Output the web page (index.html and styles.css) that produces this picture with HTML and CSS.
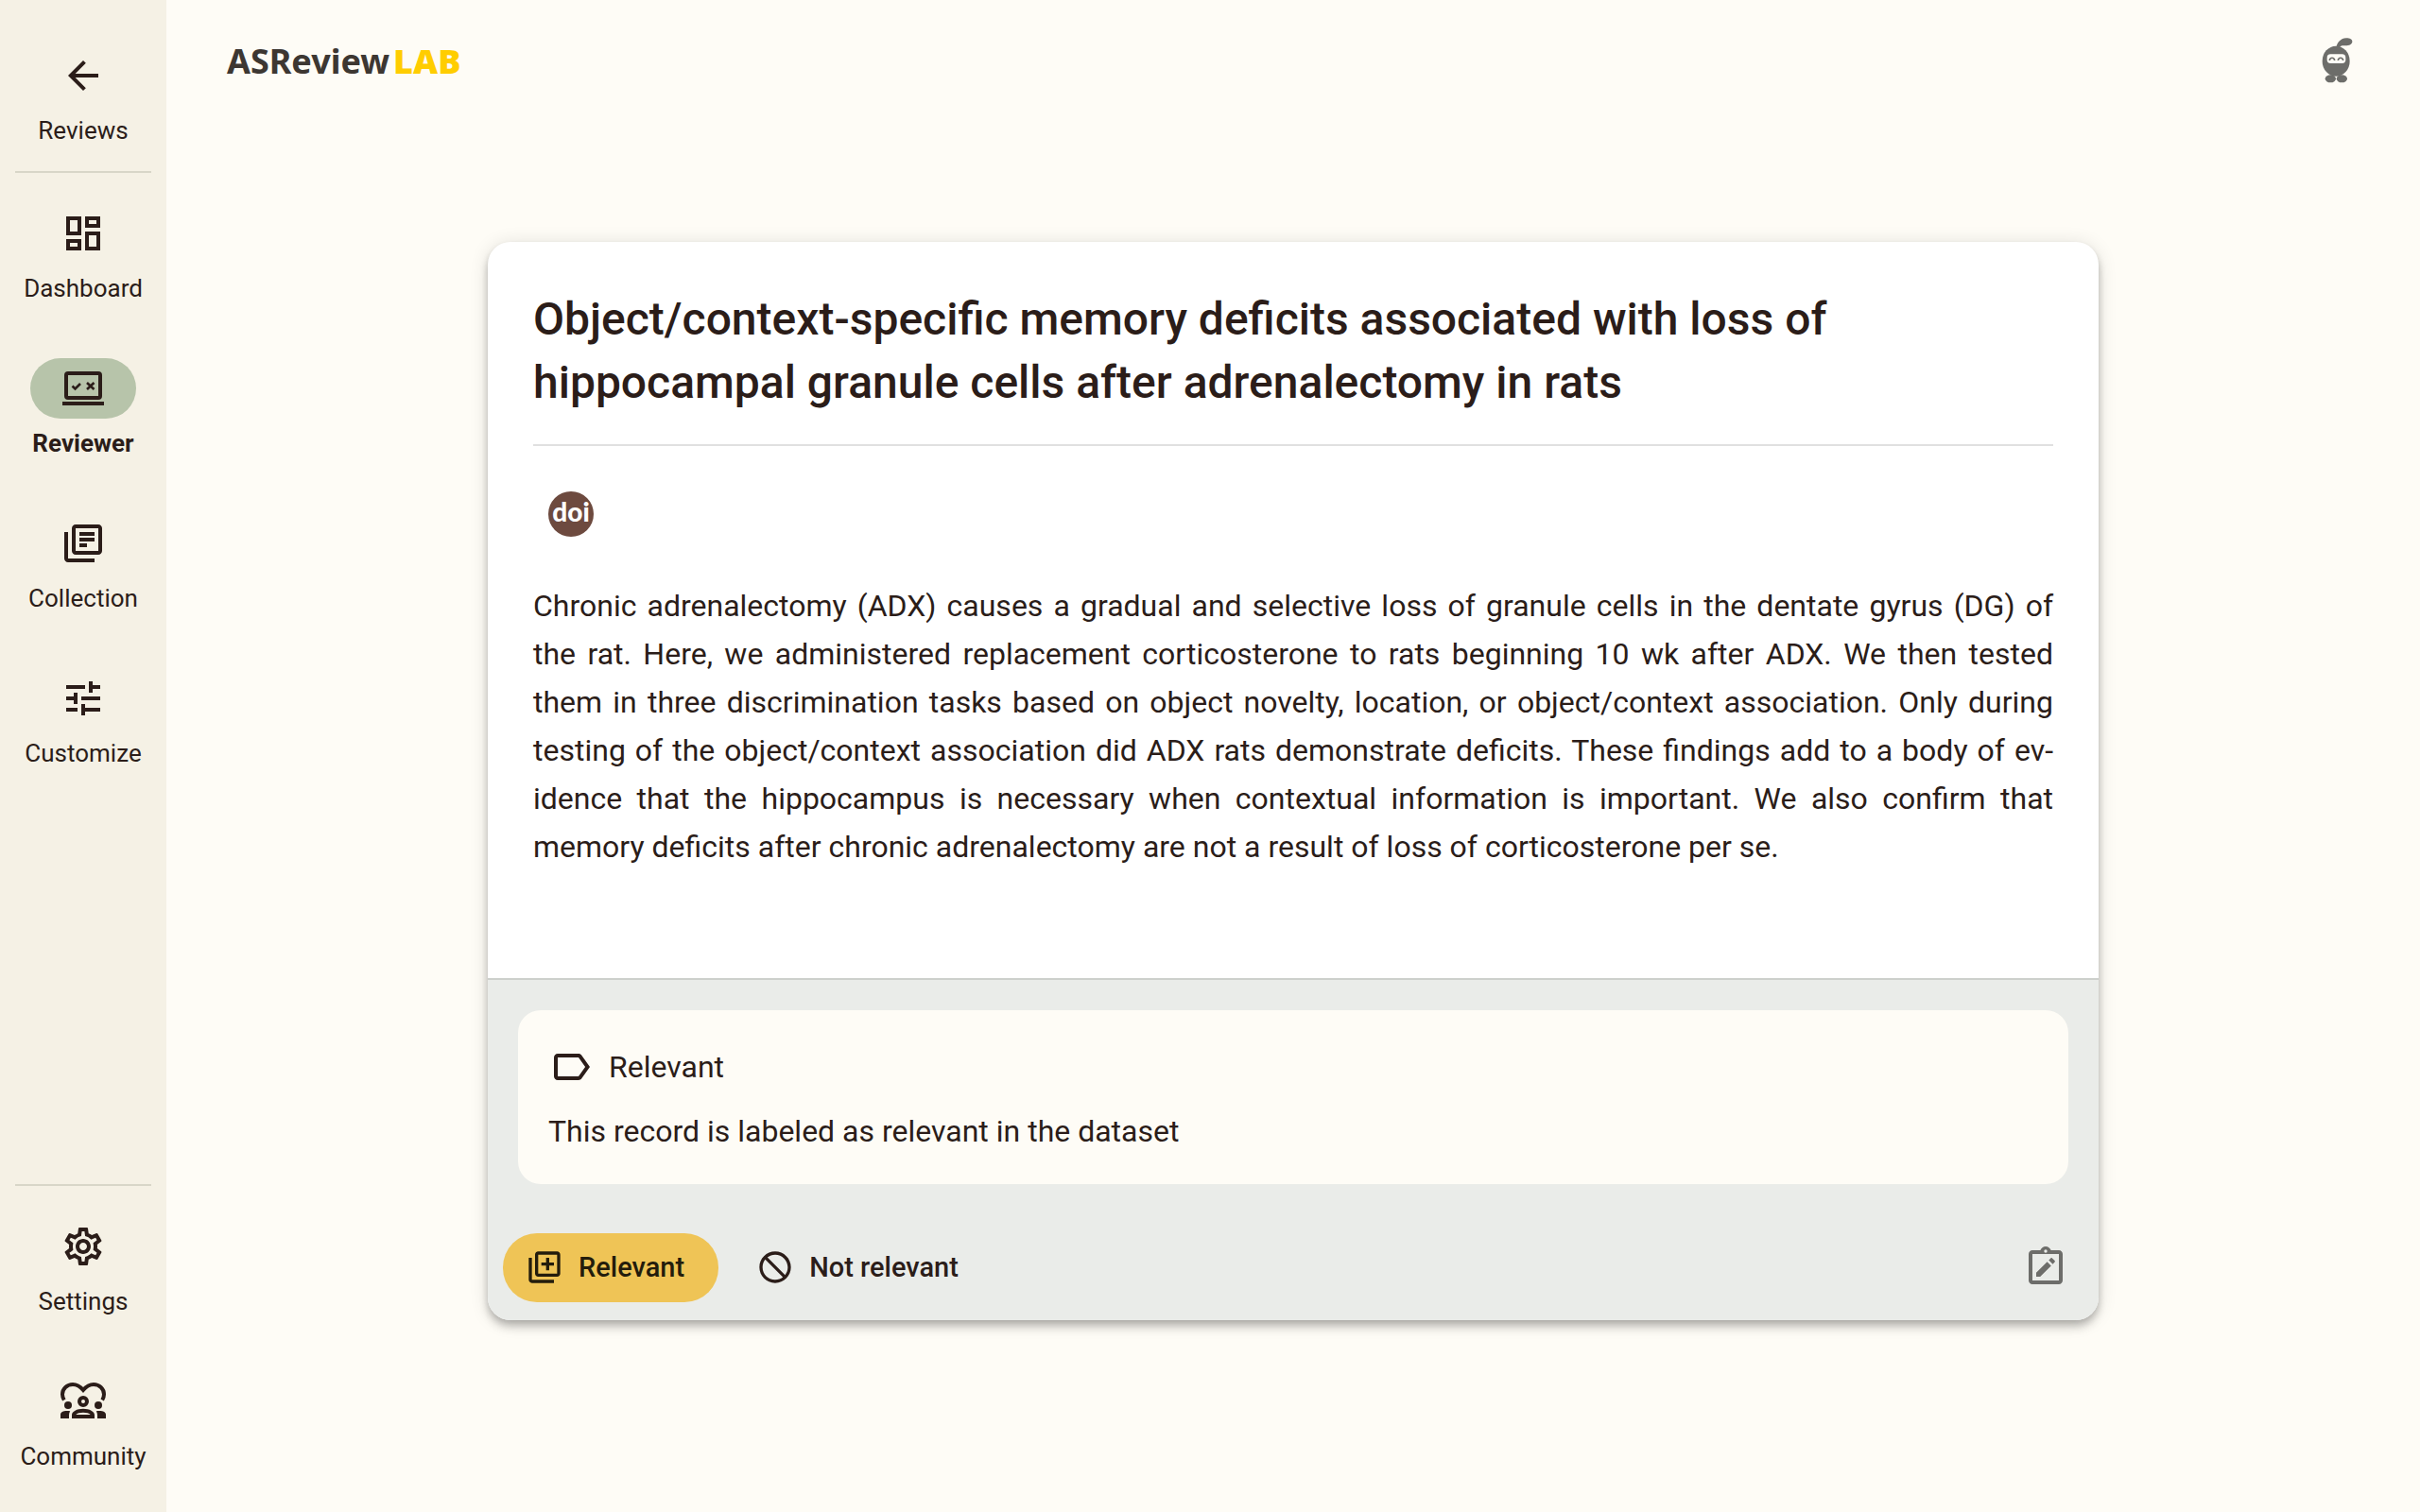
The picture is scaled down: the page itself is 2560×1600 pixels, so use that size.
FILE: index.html
```html
<!DOCTYPE html>
<html lang="en">
<head>
<meta charset="utf-8">
<meta name="viewport" content="width=device-width, initial-scale=1">
<title>ASReview LAB</title>
<link rel="stylesheet" href="styles.css">
</head>
<body>
<div class="app">
  <nav class="sidebar" aria-label="Main">
    <a class="nav-item" href="#reviews">
      <span class="nav-icon"><svg class="icon" viewBox="0 0 24 24"><path d="M20 11H7.83l5.59-5.59L12 4l-8 8 8 8 1.41-1.41L7.83 13H20v-2z"/></svg></span>
      <span class="nav-label">Reviews</span>
    </a>
    <hr class="nav-divider">
    <div class="nav-list">
      <a class="nav-item" href="#dashboard">
        <span class="nav-icon"><svg class="icon" viewBox="0 0 24 24"><path d="M19 5v2h-4V5h4M9 5v6H5V5h4m10 8v6h-4v-6h4M9 17v2H5v-2h4M21 3h-8v6h8V3zM11 3H3v10h8V3zm10 8h-8v10h8V11zm-10 4H3v6h8v-6z"/></svg></span>
        <span class="nav-label">Dashboard</span>
      </a>
      <a class="nav-item nav-item-active" href="#reviewer" aria-current="page">
        <span class="nav-icon"><svg class="icon" viewBox="0 0 48 48"><g fill="none" stroke="currentColor"><rect x="6" y="8" width="36" height="26" rx="2" stroke-width="4"/><path d="M2 40h44" stroke-width="4"/><path d="M12.500 21.500l3 3 5.500-5.500M28 18l7.500 7M35.500 18l-7.500 7" stroke-width="2.600"/></g></svg></span>
        <span class="nav-label">Reviewer</span>
      </a>
      <a class="nav-item" href="#collection">
        <span class="nav-icon"><svg class="icon" viewBox="0 0 24 24"><path d="M4 6H2v14c0 1.1.9 2 2 2h14v-2H4V6zm16-4H8c-1.1 0-2 .9-2 2v12c0 1.1.9 2 2 2h12c1.100 0 2-.9 2-2V4c0-1.100-.9-2-2-2zm0 14H8V4h12v12zM10 9h8v2h-8zm0 3h4v2h-4zm0-6h8v2h-8z"/></svg></span>
        <span class="nav-label">Collection</span>
      </a>
      <a class="nav-item" href="#customize">
        <span class="nav-icon"><svg class="icon" viewBox="0 0 24 24"><path d="M3 17v2h6v-2H3zM3 5v2h10V5H3zm10 16v-2h8v-2h-8v-2h-2v6h2zM7 9v2H3v2h4v2h2V9H7zm14 4v-2H11v2h10zm-6-4h2V7h4V5h-4V3h-2v6z"/></svg></span>
        <span class="nav-label">Customize</span>
      </a>
    </div>
    <div class="nav-spacer"></div>
    <hr class="nav-divider">
    <div class="nav-list">
      <a class="nav-item" href="#settings">
        <span class="nav-icon"><svg class="icon" viewBox="0 0 24 24"><path d="M19.43 12.98c.04-.32.07-.64.07-.98 0-.34-.03-.66-.07-.98l2.11-1.65c.19-.15.24-.42.12-.64l-2-3.46c-.09-.16-.26-.25-.44-.25-.06 0-.12.01-.17.03l-2.49 1c-.52-.4-1.08-.73-1.69-.98l-.38-2.65C14.46 2.18 14.25 2 14 2h-4c-.25 0-.46.18-.49.42l-.38 2.65c-.61.25-1.17.59-1.69.98l-2.49-1c-.06-.02-.12-.03-.18-.03-.17 0-.34.09-.43.25l-2 3.46c-.13.22-.07.49.12.64l2.11 1.65c-.04.32-.07.65-.07.98 0 .33.03.66.07.98l-2.11 1.65c-.19.15-.24.42-.12.64l2 3.46c.09.16.26.25.44.25.06 0 .12-.01.17-.03l2.49-1c.52.4 1.08.73 1.69.98l.38 2.65c.03.24.24.42.49.42h4c.25 0 .46-.18.49-.42l.38-2.65c.61-.25 1.17-.59 1.69-.98l2.49 1c.06.02.12.03.18.03.17 0 .34-.09.43-.25l2-3.46c.12-.22.07-.49-.12-.64l-2.11-1.65zm-1.98-1.71c.04.31.05.52.05.73 0 .21-.02.43-.05.73l-.14 1.13.89.7 1.08.84-.7 1.21-1.27-.51-1.04-.42-.9.68c-.43.32-.84.56-1.25.73l-1.06.43-.16 1.13-.2 1.35h-1.4l-.19-1.35-.16-1.13-1.06-.43c-.43-.18-.83-.41-1.23-.71l-.91-.7-1.06.43-1.27.51-.7-1.21 1.08-.84.89-.7-.14-1.13c-.03-.31-.05-.54-.05-.74s.02-.43.05-.73l.14-1.13-.89-.7-1.08-.84.7-1.21 1.27.51 1.04.42.9-.68c.43-.32.84-.56 1.25-.73l1.06-.43.16-1.13.2-1.35h1.39l.19 1.35.16 1.13 1.06.43c.43.18.83.41 1.23.71l.91.7 1.06-.43 1.27-.51.7 1.21-1.07.85-.89.7.14 1.13zM12 8c-2.21 0-4 1.79-4 4s1.79 4 4 4 4-1.79 4-4-1.790-4-4-4zm0 6c-1.100 0-2-.9-2-2s.9-2 2-2 2 .9 2 2-.9 2-2 2z"/></svg></span>
        <span class="nav-label">Settings</span>
      </a>
      <a class="nav-item" href="#community">
        <span class="nav-icon"><svg class="icon" viewBox="0 0 48 48"><path d="M3.800 22.500C2.600 20.500 2 18.500 2 16.500 2 10.500 7 6 13 6c4.500 0 8 2.400 11 6 3-3.600 6.500-6 11-6 6 0 11 4.500 11 10.500 0 2-.6 4-1.800 6" fill="none" stroke="currentColor" stroke-width="4"/><circle cx="24" cy="24" r="4" fill="none" stroke="currentColor" stroke-width="4"/><circle cx="8" cy="28" r="4"/><circle cx="40" cy="28" r="4"/><path d="M0 42v-4c0-2.600 3-4 6.500-4 1.300 0 2.500.1 3.700.3C9.400 35.500 9 37 9 38.500V42zM48 42v-4c0-2.600-3-4-6.500-4-1.300 0-2.500.1-3.700.3.8 1.200 1.200 2.700 1.200 4.200V42z"/><path fill-rule="evenodd" d="M12 42v-3.500c0-4 5.300-6.800 12-6.800s12 2.800 12 6.800V42zm4.300-4h15.400c-1.300-1.500-4.300-2.300-7.700-2.300s-6.400.8-7.700 2.300z"/></svg></span>
        <span class="nav-label">Community</span>
      </a>
    </div>
  </nav>

  <div class="content">
    <header class="topbar">
      <a class="logo" href="#home">ASReview<span class="logo-lab">LAB</span></a>
      <button class="mascot" type="button" aria-label="Elas">
        <svg class="icon" viewBox="84 60 144 144"><path d="M154 92c2-14 12-30 32-31 12 0 19 4 19 11 0 8-9 13-22 13-8 0-13-1-17 4z"/><ellipse cx="153.500" cy="134" rx="43.500" ry="48"/><ellipse cx="136" cy="190" rx="17" ry="12"/><ellipse cx="172" cy="190" rx="17" ry="12"/><rect x="125" y="112" width="59" height="29" rx="11" fill="#fefcf6"/><path d="M133 132c1-11 15-11 16 0M160 132c1-11 15-11 16 0" fill="none" stroke="currentColor" stroke-width="5"/></svg>
      </button>
    </header>

    <main class="stage">
      <article class="card">
        <section class="record">
          <h1 class="record-title">Object/context-specific memory deficits associated with loss of hippocampal granule cells after adrenalectomy in rats</h1>
          <hr class="record-divider">
          <a class="doi" href="#doi"><span class="doi-badge">doi</span></a>
          <p class="abstract">Chronic adrenalectomy (ADX) causes a gradual and selective loss of granule cells in the dentate gyrus (DG) of the&nbsp;rat. Here, we administered replacement corticosterone to rats beginning 10 wk after ADX. We then tested them&nbsp;in&nbsp;three discrimination tasks based on object novelty, location, or object/context association. Only during testing&nbsp;of&nbsp;the object/context association did ADX rats demonstrate deficits. These findings add to a body of ev&shy;idence&nbsp;that the hippocampus is necessary when contextual information is important. We also confirm that memory&nbsp;deficits after chronic adrenalectomy are not a result of loss of corticosterone per se.</p>
        </section>
        <section class="decision">
          <div class="hint">
            <div class="hint-head">
              <svg class="icon" viewBox="0 0 24 24"><path d="M17.63 5.84C17.27 5.33 16.67 5 16 5L5 5.010C3.900 5.010 3 5.900 3 7v10c0 1.100.9 1.990 2 1.990L16 19c.67 0 1.270-.33 1.630-.84L22 12l-4.370-6.160zM16 17H5V7h11l3.550 5L16 17z"/></svg>
              <span>Relevant</span>
            </div>
            <p class="hint-text">This record is labeled as relevant in the dataset</p>
          </div>
          <div class="actions">
            <button class="btn btn-primary" type="button">
              <svg class="icon icon-small" viewBox="0 0 24 24"><path d="M4 6H2v14c0 1.100.9 2 2 2h14v-2H4V6zm16-4H8c-1.100 0-2 .9-2 2v12c0 1.100.9 2 2 2h12c1.100 0 2-.9 2-2V4c0-1.100-.9-2-2-2zm0 14H8V4h12v12zm-7-2h2v-3h3V9h-3V6h-2v3h-3v2h3v3z"/></svg>
              Relevant
            </button>
            <button class="btn" type="button">
              <svg class="icon icon-small" viewBox="0 0 24 24"><path d="M12 2C6.480 2 2 6.480 2 12s4.480 10 10 10 10-4.480 10-10S17.520 2 12 2zm0 18c-4.420 0-8-3.580-8-8 0-1.850.63-3.550 1.690-4.900L16.900 18.310C15.550 19.370 13.850 20 12 20zm6.310-3.100L7.100 5.690C8.450 4.630 10.150 4 12 4c4.420 0 8 3.580 8 8 0 1.850-.63 3.550-1.690 4.900z"/></svg>
              Not relevant
            </button>
            <button class="note" type="button" aria-label="Add note">
              <svg class="icon" viewBox="0 2 48 48"><path fill-rule="evenodd" d="M10 8h8.400C19.200 5.700 21.400 4 24 4s4.800 1.700 5.600 4H38c2.200 0 4 1.800 4 4v28c0 2.200-1.800 4-4 4H10c-2.200 0-4-1.800-4-4V12c0-2.200 1.800-4 4-4zm0 4v28h28V12zm14-4.700a1.700 1.700 0 1 0 0 3.400 1.700 1.700 0 0 0 0-3.400z"/><path d="M14 31.800 25.600 20.200l4.200 4.200L18.200 36H14zM33.600 20.600l-2.100 2.100-4.200-4.200 2.100-2.100c.4-.4 1.100-.4 1.500 0l2.700 2.700c.4.4.4 1.100 0 1.500z"/></svg>
            </button>
          </div>
        </section>
      </article>
    </main>
  </div>
</div>
</body>
</html>
```
FILE: styles.css
```css
* {
  box-sizing: border-box;
}

body {
  margin: 0;
  background: #fefcf6;
  color: #2b1d19;
  font-family: Roboto, "Liberation Sans", sans-serif;
  font-size: 32px;
}

a {
  color: inherit;
  text-decoration: none;
}

button {
  border: 0;
  background: none;
  color: inherit;
  font: inherit;
  cursor: pointer;
}

hr {
  height: 2px;
  border: 0;
}

.icon {
  display: block;
  flex: none;
  width: 48px;
  height: 48px;
  fill: currentColor;
}

.icon-small {
  width: 40px;
  height: 40px;
}

.app {
  display: flex;
  min-height: 100vh;
}

/* Navigation rail */
.sidebar {
  display: flex;
  flex: none;
  flex-direction: column;
  width: 176px;
  padding: 24px 0 17px;
  background: #f5f1e5;
}

.nav-list {
  display: flex;
  flex-direction: column;
  gap: 8px;
}

.nav-item {
  display: flex;
  flex-direction: column;
  align-items: center;
  gap: 8px;
  padding: 24px 0;
}

.nav-icon {
  display: flex;
  align-items: center;
  justify-content: center;
  width: 112px;
  height: 64px;
  border-radius: 32px;
}

.nav-label {
  font-size: 26px;
  line-height: 36px;
}

.nav-item-active .nav-icon {
  background: #b7c4aa;
}

.nav-item-active .nav-label {
  font-weight: 700;
}

.nav-divider {
  flex: none;
  margin: 1px 16px 8px;
  background: #d8d6c8;
}

.nav-spacer {
  flex: 1;
}

/* Main column */
.content {
  display: flex;
  flex: 1;
  flex-direction: column;
  min-width: 0;
}

.topbar {
  display: flex;
  align-items: center;
  justify-content: space-between;
  height: 128px;
  padding: 0 48px 0 64px;
}

.logo {
  display: flex;
  gap: 4px;
  color: #3d3732;
  font-family: "Noto Sans", sans-serif;
  font-size: 36px;
  font-weight: 700;
}

.logo-lab {
  color: #ffcd00;
  font-weight: 900;
}

.mascot,
.note {
  padding: 16px;
  color: #6d6d6a;
}

.stage {
  padding: 128px 64px;
}

.card {
  max-width: 1704px;
  margin: 0 auto;
  overflow: hidden;
  border-radius: 24px;
  background: #ffffff;
  box-shadow: 0 4px 8px -2px rgba(0, 0, 0, 0.2), 0 8px 10px 0 rgba(0, 0, 0, 0.14), 0 2px 20px 0 rgba(0, 0, 0, 0.12);
}

.record {
  padding: 48px 48px 113px;
}

.record-title {
  margin: 0;
  font-size: 48px;
  font-weight: 500;
  line-height: 67px;
}

.record-divider {
  margin: 32px 0;
  background: #e0e0e0;
}

.doi {
  display: inline-flex;
  padding: 16px;
  vertical-align: top;
}

.doi-badge {
  display: flex;
  justify-content: center;
  width: 48px;
  height: 48px;
  border-radius: 50%;
  background: #6d4a3f;
  color: #ffffff;
  font-family: Lato, sans-serif;
  font-size: 28px;
  font-weight: 900;
  line-height: 42px;
}

.abstract {
  margin: 32px 0 0;
  line-height: 51px;
  text-align: justify;
  hyphens: manual;
}

.decision {
  border-top: 2px solid #cdd0cc;
  background: #eaece9;
}

.hint {
  display: flex;
  flex-direction: column;
  gap: 16px;
  margin: 32px 32px 48px;
  padding: 32px;
  border-radius: 24px;
  background: #fefcf6;
}

.hint-head {
  display: flex;
  align-items: center;
  gap: 16px;
  height: 56px;
}

.hint-text {
  margin: 0;
  line-height: 48px;
}

.actions {
  display: flex;
  align-items: center;
  gap: 16px;
  padding: 0 16px 16px;
}

.btn {
  display: flex;
  align-items: center;
  gap: 16px;
  height: 73px;
  padding: 0 36px 0 24px;
  border-radius: 36px;
  font-size: 29px;
  font-weight: 500;
}

.btn-primary {
  background: #efc456;
  color: #231c0c;
}

.note {
  margin-left: auto;
}
```
